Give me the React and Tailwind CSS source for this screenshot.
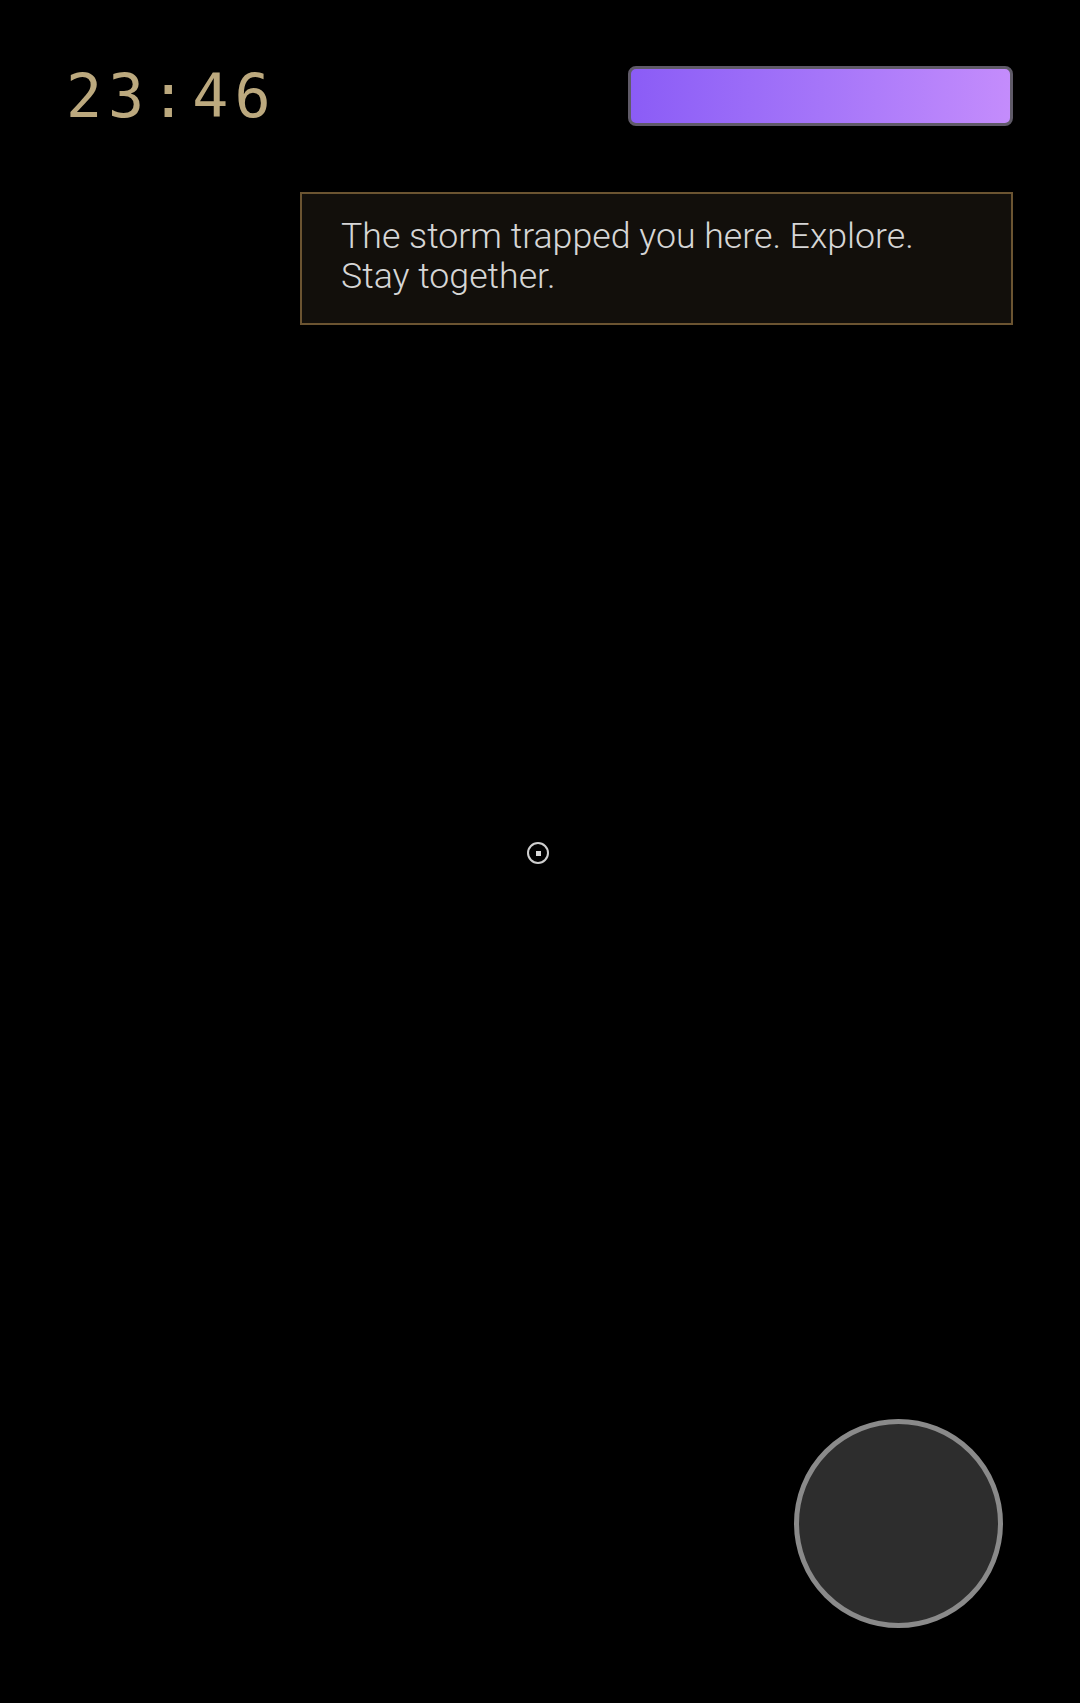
export default function App() {
  return (
    <div className="relative min-h-screen h-[1703px] w-full overflow-hidden bg-black">
      {/* top HUD */}
      <div className="flex items-center justify-between pl-[66px] pr-[67px] pt-[66px]">
        <span
          className="text-[60px] leading-none tracking-[0.1em] text-[#bca97e]"
          style={{ fontFamily: '"DejaVu Sans Mono", monospace' }}
        >
          23:46
        </span>
        <div className="h-[60px] w-[385px] rounded-[8px] border-[3px] border-[#5f5a68] bg-gradient-to-r from-[#8b5cf6] via-[#a575f9] to-[#c48cfc]" />
      </div>

      {/* message */}
      <div className="mt-[66px] flex justify-end pr-[67px]">
        <div className="w-[713px] border-2 border-[#6b5431] bg-[#120f0b] pl-[39px] pr-[40px] pt-[22px] pb-[27px]">
          <p
            className="text-[35.7px] font-light leading-[40px] text-[#d6d6d6]"
            style={{ fontFamily: 'Roboto, "Noto Sans", sans-serif' }}
          >
            The storm trapped you here. Explore. Stay together.
          </p>
        </div>
      </div>

      {/* crosshair */}
      <div className="absolute left-[527px] top-[842px] flex h-[22px] w-[22px] items-center justify-center rounded-full border-2 border-[#cfcfcf]">
        <div className="h-[5px] w-[5px] bg-[#d8d8d8]" />
      </div>

      {/* action button */}
      <button className="absolute left-[794px] top-[1419px] h-[209px] w-[209px] rounded-full border-[5px] border-[#8a8a8a] bg-[#2d2d2d]" />
    </div>
  );
}
